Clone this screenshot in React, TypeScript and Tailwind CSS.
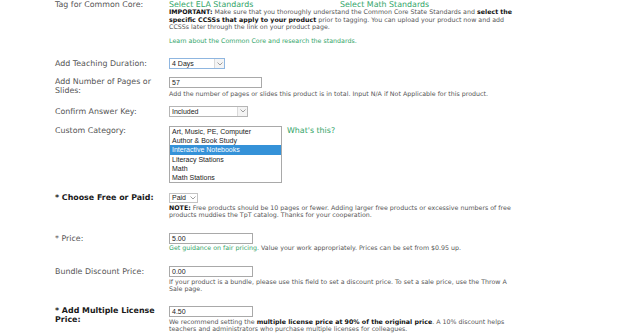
import React from 'react';

const green = 'text-[#33a569]';

function Chevron() {
  return (
    <div className="flex h-full w-[10px] items-center justify-center border-l border-[#dadada] bg-[#f4f4f4]">
      <svg width="6" height="4" viewBox="0 0 6 4">
        <path d="M0.5 0.5 L3 3 L5.5 0.5" fill="none" stroke="#888" strokeWidth="0.8" />
      </svg>
    </div>
  );
}

function Select({ value, width, blue }: { value: string; width: string; blue?: boolean }) {
  return (
    <div
      className={`flex h-[11px] items-center justify-between border bg-white font-['Liberation_Sans',Arial,sans-serif] text-[7px] text-[#222] ${width} ${
        blue ? 'border-[#8fb6e0]' : 'border-[#b5b5b5]'
      }`}
    >
      <span className="pl-[2px] leading-[9px]">{value}</span>
      <Chevron />
    </div>
  );
}

function Input({ value, width }: { value: string; width: string }) {
  return (
    <div
      className={`flex h-[11px] items-center border border-[#a9a9a9] bg-white pl-[2px] font-['Liberation_Sans_Narrow','Liberation_Sans',Arial,sans-serif] text-[7px] leading-[9px] text-[#222] ${width}`}
    >
      {value}
    </div>
  );
}

function Label({ children, bold, lh }: { children: React.ReactNode; bold?: boolean; lh?: string }) {
  return (
    <div
      className={`w-[114px] shrink-0 text-[7.9px] ${lh ?? 'leading-[9px]'} ${
        bold ? 'font-bold text-[#1a1a1a]' : 'text-[#555]'
      }`}
    >
      {children}
    </div>
  );
}

function Hint({ children }: { children: React.ReactNode }) {
  return <div className="w-[345px] text-[6.3px] leading-[7.5px] text-[#555]">{children}</div>;
}

const categories = [
  'Art, Music, PE, Computer',
  'Author & Book Study',
  'Interactive Notebooks',
  'Literacy Stations',
  'Math',
  'Math Stations',
];

export default function App() {
  return (
    <div className="h-[334px] w-[640px] overflow-hidden bg-white pl-[55px] font-['DejaVu_Sans',Verdana,sans-serif]">
      {/* common core */}
      <div className="flex">
        <Label>Tag for Common Core:</Label>
        <div>
          <div className={`flex text-[7.9px] leading-[9px] ${green}`}>
            <span className="w-[171px]">Select ELA Standards</span>
            <span>Select Math Standards</span>
          </div>
          <div className="mt-[-1px]">
            <Hint>
              <b className="text-[#111]">IMPORTANT:</b> Make sure that you thoroughly understand the Common
              Core State Standards and <b className="text-[#111]">select the specific CCSSs that apply to your product</b>{' '}
              prior to tagging. You can upload your product now and add CCSSs later through the link on your product
              page.
            </Hint>
          </div>
          <div className={`mt-[6px] text-[6.3px] leading-[7.5px] ${green}`}>
            Learn about the Common Core and research the standards.
          </div>
        </div>
      </div>

      {/* teaching duration */}
      <div className="mt-[14px] flex">
        <Label lh="leading-[11px]">Add Teaching Duration:</Label>
        <Select value="4 Days" width="w-[56px]" blue />
      </div>

      {/* pages */}
      <div className="mt-[8px] flex">
        <Label>
          Add Number of Pages or
          <br />
          Slides:
        </Label>
        <div>
          <Input value="57" width="w-[93px]" />
          <div className="mt-[2px]">
            <Hint>Add the number of pages or slides this product is in total. Input N/A if Not Applicable for this product.</Hint>
          </div>
        </div>
      </div>

      {/* answer key */}
      <div className="mt-[8px] flex">
        <Label lh="leading-[11px]">Confirm Answer Key:</Label>
        <Select value="Included" width="w-[79px]" />
      </div>

      {/* custom category */}
      <div className="mt-[9.5px] flex">
        <Label>Custom Category:</Label>
        <div className="w-[113px] border border-[#a9a9a9] bg-white font-['Liberation_Sans',Arial,sans-serif] text-[7px] text-[#222]">
          {categories.map((c) => (
            <div
              key={c}
              className={`h-[9.2px] pl-[2px] leading-[9.2px] ${c === 'Interactive Notebooks' ? 'bg-[#3592d8] text-white' : ''}`}
            >
              {c}
            </div>
          ))}
        </div>
        <div className={`ml-[5px] text-[7.9px] leading-[9px] ${green}`}>What's this?</div>
      </div>

      {/* free or paid */}
      <div className="mt-[10px] flex">
        <Label bold lh="leading-[10px]">* Choose Free or Paid:</Label>
        <div>
          <div className="flex h-[10px] w-[29px] items-center justify-between border border-[#c4c4c4] bg-white font-['Liberation_Sans',Arial,sans-serif] text-[7px] text-[#222]">
            <span className="pl-[2px] leading-[8px]">Paid</span>
            <svg width="6" height="4" viewBox="0 0 6 4" className="mr-[1px]">
              <path d="M0.5 0.5 L3 3 L5.5 0.5" fill="none" stroke="#888" strokeWidth="0.8" />
            </svg>
          </div>
          <div className="mt-[0.5px]">
            <Hint>
              <b className="text-[#111]">NOTE:</b> Free products should be 10 pages or fewer. Adding larger free products
              or excessive numbers of free products muddies the TpT catalog. Thanks for your cooperation.
            </Hint>
          </div>
        </div>
      </div>

      {/* price */}
      <div className="mt-[14px] flex">
        <Label lh="leading-[11px]">* Price:</Label>
        <div>
          <Input value="5.00" width="w-[84px]" />
          <div className="mt-[0.5px]">
            <Hint>
              <span className={green}>Get guidance on fair pricing.</span> Value your work appropriately. Prices can be
              set from $0.95 up.
            </Hint>
          </div>
        </div>
      </div>

      {/* bundle */}
      <div className="mt-[14.5px] flex">
        <Label lh="leading-[11px]">Bundle Discount Price:</Label>
        <div>
          <Input value="0.00" width="w-[84px]" />
          <div className="mt-[0.5px]">
            <Hint>
              If your product is a bundle, please use this field to set a discount price. To set a sale price, use the
              Throw A Sale page.
            </Hint>
          </div>
        </div>
      </div>

      {/* multiple license */}
      <div className="mt-[13.5px] flex">
        <Label bold>
          * Add Multiple License
          <br />
          Price:
        </Label>
        <div>
          <Input value="4.50" width="w-[84px]" />
          <div className="mt-[0.5px]">
            <Hint>
              We recommend setting the <b className="text-[#111]">multiple license price at 90% of the original price</b>.
              A 10% discount helps teachers and administrators who purchase multiple licenses for colleagues.
            </Hint>
          </div>
        </div>
      </div>
    </div>
  );
}
